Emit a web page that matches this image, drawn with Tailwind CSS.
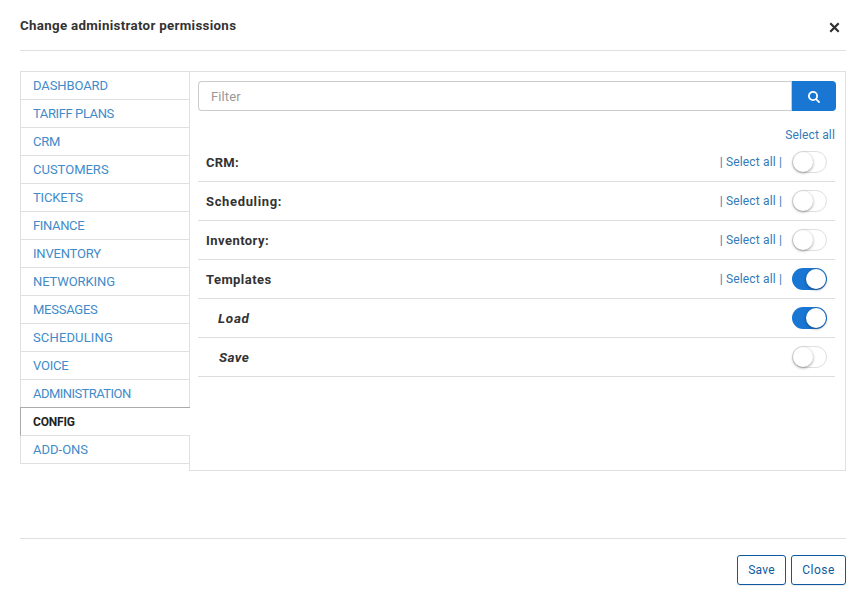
<!DOCTYPE html>
<html lang="en">
<head>
<meta charset="utf-8">
<title>Change administrator permissions</title>
<script src="https://cdn.jsdelivr.net/npm/@tailwindcss/browser@4"></script>
</head>
<body class="bg-white">
<main class="w-[865px] h-[600px] overflow-hidden flex flex-col pl-5 pr-[19px] font-[Roboto,sans-serif] text-[13px] leading-[18px] text-[#333]">
  <header class="h-[51px] shrink-0 border-b border-[#e0e0e0] flex items-start justify-between">
    <h1 class="mt-[17px] font-bold text-[13.3px] leading-[18px] tracking-[0.32px]">Change administrator permissions</h1>
    <button class="mt-[22px] mr-[6px]" aria-label="Close dialog"><svg class="block" width="11" height="11" viewBox="0 0 11 11" fill="none" stroke="#303030" stroke-width="2.2"><path d="M1.3 1.3l8.4 8.4M9.7 1.3l-8.4 8.4"/></svg></button>
  </header>
  <section class="mt-5 h-[400px] shrink-0 flex">
    <nav class="w-[169px] shrink-0 text-[#428bca] border-t border-[#e0e0e0]">
      <a class="h-7 flex items-center pl-3 border-l border-b border-[#e0e0e0] tracking-[-0.1px]">DASHBOARD</a>
      <a class="h-7 flex items-center pl-3 border-l border-b border-[#e0e0e0] tracking-[-0.4px]">TARIFF PLANS</a>
      <a class="h-7 flex items-center pl-3 border-l border-b border-[#e0e0e0] tracking-[-0.2px]">CRM</a>
      <a class="h-7 flex items-center pl-3 border-l border-b border-[#e0e0e0]">CUSTOMERS</a>
      <a class="h-7 flex items-center pl-3 border-l border-b border-[#e0e0e0] tracking-[-0.15px]">TICKETS</a>
      <a class="h-7 flex items-center pl-3 border-l border-b border-[#e0e0e0] tracking-[-0.35px]">FINANCE</a>
      <a class="h-7 flex items-center pl-3 border-l border-b border-[#e0e0e0] tracking-[-0.2px]">INVENTORY</a>
      <a class="h-7 flex items-center pl-3 border-l border-b border-[#e0e0e0] tracking-[-0.1px]">NETWORKING</a>
      <a class="h-7 flex items-center pl-3 border-l border-b border-[#e0e0e0] tracking-[-0.25px]">MESSAGES</a>
      <a class="h-7 flex items-center pl-3 border-l border-b border-[#e0e0e0] tracking-[0.15px]">SCHEDULING</a>
      <a class="h-7 flex items-center pl-3 border-l border-b border-[#e0e0e0] tracking-[-0.2px]">VOICE</a>
      <a class="h-7 flex items-center pl-3 border-l border-[#e0e0e0] tracking-[-0.55px]">ADMINISTRATION</a>
      <a class="relative h-[29px] mr-[-1px] flex items-center pl-3 border-l border-t border-b border-l-[#aaa] border-t-[#aaa] border-b-[#e0e0e0] -mt-px bg-white text-[#222] font-bold text-xs tracking-[-0.2px]">CONFIG</a>
      <a class="h-7 flex items-center pl-3 border-l border-b border-[#e0e0e0]">ADD-ONS</a>
    </nav>
    <div class="grow border border-[#e0e0e0] pl-2 pr-[9px] pt-[9px]">
      <div class="flex h-[30px]">
        <div class="grow border border-r-0 border-[#ccc] rounded-l-[4px] pl-3 pt-px flex items-center text-[#999] tracking-[0.1px]">Filter</div>
        <button class="border-l border-[#ccc] box-content w-[44px] bg-[#1976d2] rounded-r-[4px] flex items-center justify-center" aria-label="Search"><svg class="mt-px" width="12" height="12" viewBox="0 0 12 12" fill="none" stroke="#fff" stroke-width="1.8"><circle cx="5" cy="5" r="4.1"/><path d="M7.8 7.8l3.8 3.8"/></svg></button>
      </div>
      <div class="mr-px">
        <div class="h-8 pt-4 text-right text-xs text-[#337ab7] tracking-[0.15px]">Select all</div>
        <div class="h-[39px] border-b border-[#ddd] flex items-center pl-2 pr-2"><b class="grow pt-px tracking-[0.25px]">CRM:</b><span class="text-xs text-[#337ab7] tracking-[0.15px] mr-[10px]">| Select all |</span><i class="block w-[35px] h-[22px] rounded-full border border-[#dfdfdf]"><i class="block size-5 rounded-full bg-white shadow-[0_1px_3px_rgba(0,0,0,0.4)]"></i></i></div>
        <div class="h-[39px] border-b border-[#ddd] flex items-center pl-2 pr-2"><b class="grow pt-px tracking-[0.65px]">Scheduling:</b><span class="text-xs text-[#337ab7] tracking-[0.15px] mr-[10px]">| Select all |</span><i class="block w-[35px] h-[22px] rounded-full border border-[#dfdfdf]"><i class="block size-5 rounded-full bg-white shadow-[0_1px_3px_rgba(0,0,0,0.4)]"></i></i></div>
        <div class="h-[39px] border-b border-[#ddd] flex items-center pl-2 pr-2"><b class="grow pt-px tracking-[0.45px]">Inventory:</b><span class="text-xs text-[#337ab7] tracking-[0.15px] mr-[10px]">| Select all |</span><i class="block w-[35px] h-[22px] rounded-full border border-[#dfdfdf]"><i class="block size-5 rounded-full bg-white shadow-[0_1px_3px_rgba(0,0,0,0.4)]"></i></i></div>
        <div class="h-[39px] border-b border-[#ddd] flex items-center pl-2 pr-2"><b class="grow pt-px tracking-[0.45px]">Templates</b><span class="text-xs text-[#337ab7] tracking-[0.15px] mr-[10px]">| Select all |</span><i class="flex justify-end w-[35px] h-[22px] rounded-full bg-[#1976d2] p-px"><i class="block size-5 rounded-full bg-white shadow-[0_1px_3px_rgba(0,0,0,0.4)]"></i></i></div>
        <div class="h-[39px] border-b border-[#ddd] flex items-center pl-5 pr-2"><b class="grow italic text-[13.5px] leading-[18px] tracking-[0.7px]">Load</b><i class="flex justify-end w-[35px] h-[22px] rounded-full bg-[#1976d2] p-px"><i class="block size-5 rounded-full bg-white shadow-[0_1px_3px_rgba(0,0,0,0.4)]"></i></i></div>
        <div class="h-[39px] border-b border-[#ddd] flex items-center pl-[21px] pr-2"><b class="grow italic text-[13.5px] leading-[18px] tracking-[0.4px]">Save</b><i class="block w-[35px] h-[22px] rounded-full border border-[#dfdfdf]"><i class="block size-5 rounded-full bg-white shadow-[0_1px_3px_rgba(0,0,0,0.4)]"></i></i></div>
      </div>
    </div>
  </section>
  <footer class="mt-[67px] border-t border-[#e0e0e0] pt-4 flex justify-end gap-[5px] text-xs text-[#0d5a9e]">
    <button class="w-[49px] h-[30px] rounded-[3px] border border-[#0d5a9e] shadow-[0_1px_1px_rgba(0,0,0,0.08)] tracking-[0.2px]">Save</button>
    <button class="w-[55px] h-[30px] rounded-[3px] border border-[#0d5a9e] shadow-[0_1px_1px_rgba(0,0,0,0.08)] tracking-[0.5px]">Close</button>
  </footer>
</main>
</body>
</html>
